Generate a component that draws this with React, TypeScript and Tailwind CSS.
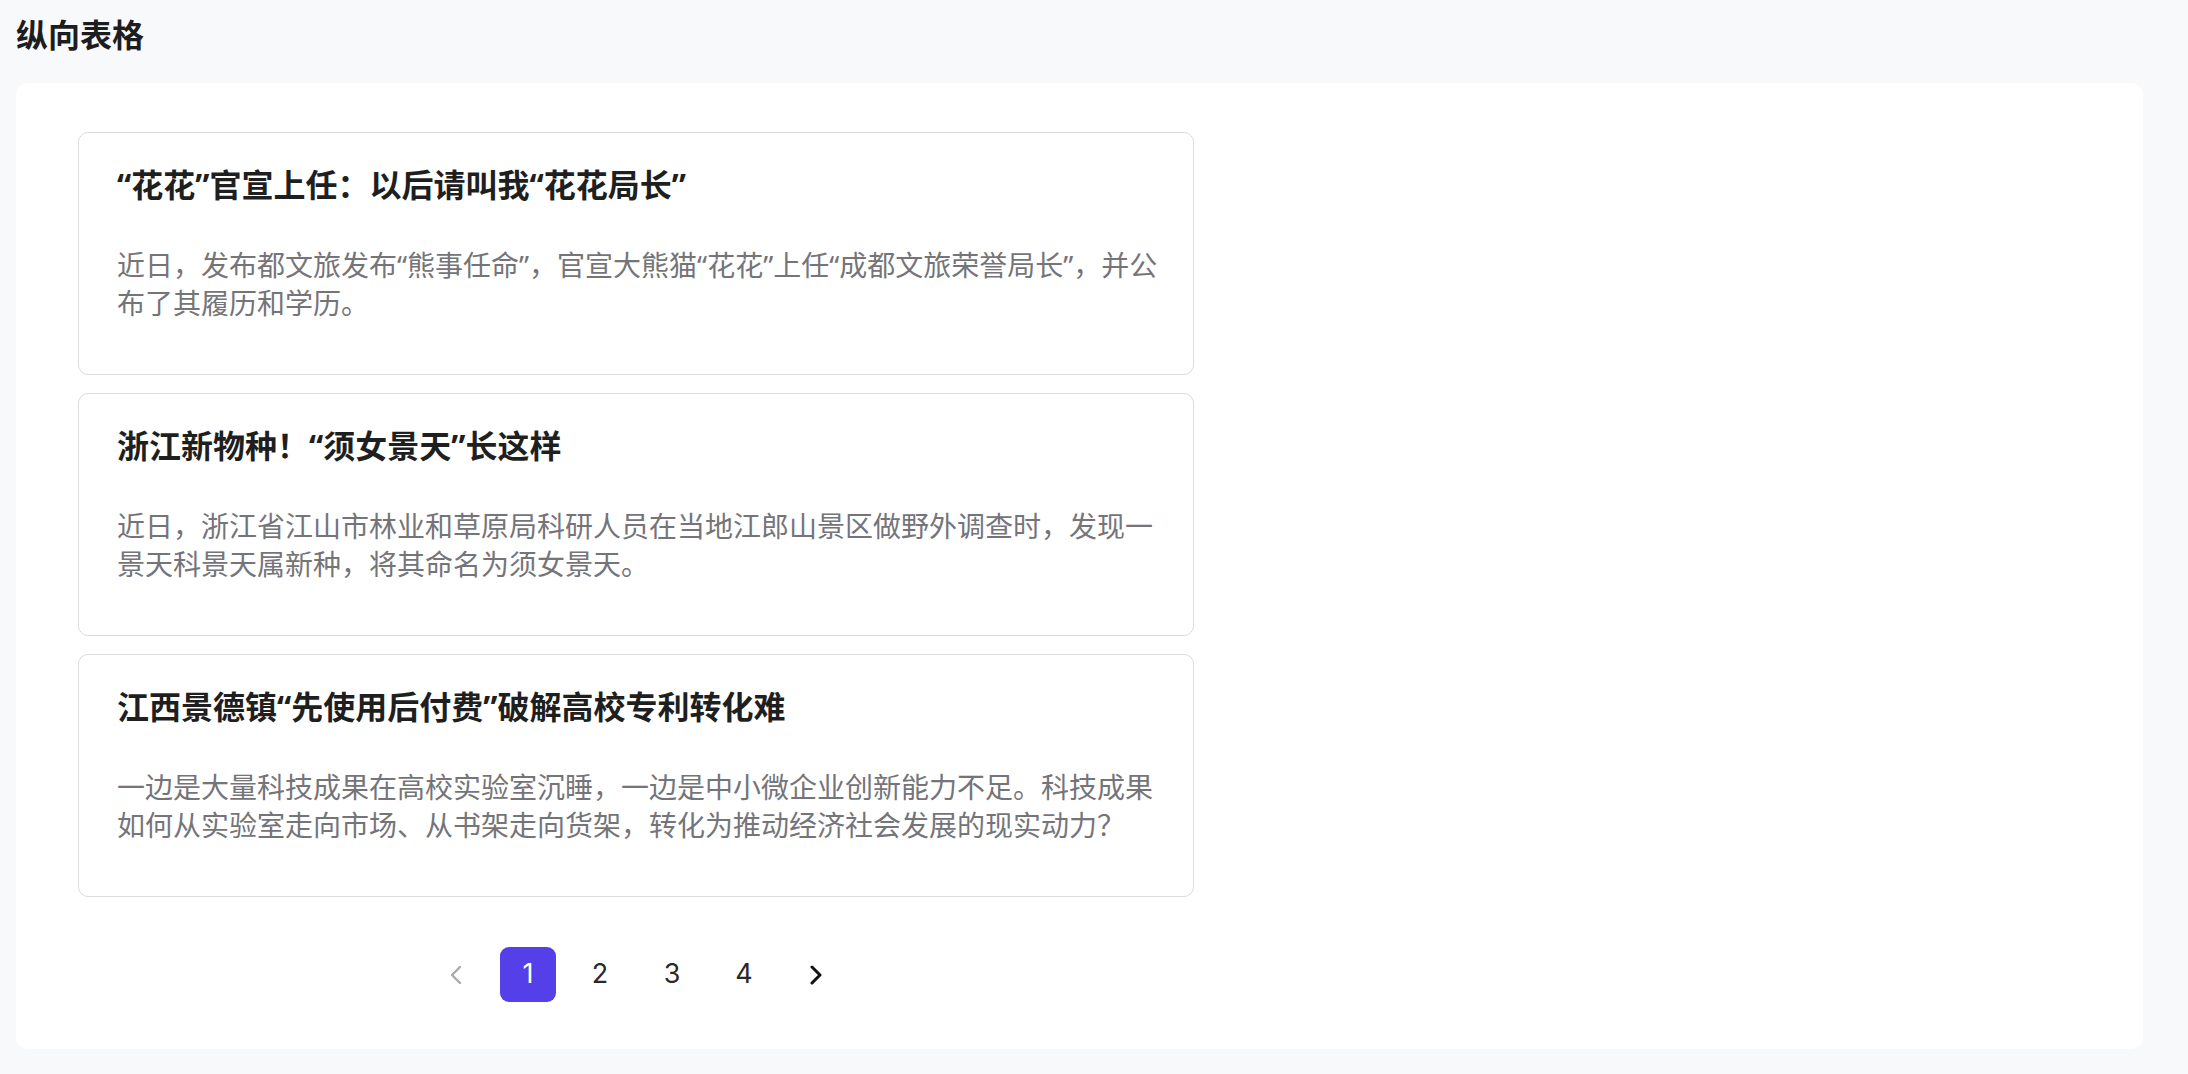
import React from "react";

const items = [
  {
    title: "“花花”官宣上任：以后请叫我“花花局长”",
    desc: "近日，发布都文旅发布“熊事任命”，官宣大熊猫“花花”上任“成都文旅荣誉局长”，并公布了其履历和学历。",
  },
  {
    title: "浙江新物种！“须女景天”长这样",
    desc: "近日，浙江省江山市林业和草原局科研人员在当地江郎山景区做野外调查时，发现一景天科景天属新种，将其命名为须女景天。",
  },
  {
    title: "江西景德镇“先使用后付费”破解高校专利转化难",
    desc: "一边是大量科技成果在高校实验室沉睡，一边是中小微企业创新能力不足。科技成果如何从实验室走向市场、从书架走向货架，转化为推动经济社会发展的现实动力？",
  },
];

export default function App() {
  return (
    <div
      className="min-h-[1074px] w-full bg-[#f8f9fb] pl-[16px] pr-[45px] pt-[16px] pb-[26px]"
      style={{ fontFamily: '"Noto Sans", "Noto Sans CJK SC", sans-serif' }}
    >
      <h1 className="text-[32px] leading-[38px] font-bold text-[#1d1d1f]">纵向表格</h1>
      <div className="mt-[29px] rounded-[12px] bg-white pl-[62px] pt-[49px] pb-[47px]">
        <div className="w-[1116px] flex flex-col gap-[18px]">
          {items.map((it, i) => (
            <div
              key={i}
              className="rounded-[10px] border border-[#dcdcdc] bg-white pl-[38px] pr-[26px] pt-[32px] pb-[52px]"
            >
              <div className="text-[32px] leading-[40px] font-bold text-[#1f1f1f]">{it.title}</div>
              <div className="mt-[42px] text-[28px] leading-[37.5px] text-[#747479]">{it.desc}</div>
            </div>
          ))}
        </div>
        <div className="w-[1116px] mt-[50px] flex justify-center">
          <div
            className="flex items-center gap-[16px]"
            style={{ fontFamily: 'Inter, "Noto Sans", sans-serif' }}
          >
            <button className="w-[56px] h-[55px] flex items-center justify-center">
              <svg width="14" height="20" viewBox="0 0 14 20" fill="none">
                <polyline points="11,2 3,10 11,18" stroke="#a9a9a9" strokeWidth="2.4" strokeLinecap="round" strokeLinejoin="round" />
              </svg>
            </button>
            <button className="w-[56px] h-[55px] rounded-[9px] bg-[#553fe8] text-white text-[27px] flex items-center justify-center">
              1
            </button>
            <button className="w-[56px] h-[55px] rounded-[9px] text-[#2a2a2a] text-[27px] flex items-center justify-center">
              2
            </button>
            <button className="w-[56px] h-[55px] rounded-[9px] text-[#2a2a2a] text-[27px] flex items-center justify-center">
              3
            </button>
            <button className="w-[56px] h-[55px] rounded-[9px] text-[#2a2a2a] text-[27px] flex items-center justify-center">
              4
            </button>
            <button className="w-[56px] h-[55px] flex items-center justify-center">
              <svg width="14" height="20" viewBox="0 0 14 20" fill="none">
                <polyline points="3,2 11,10 3,18" stroke="#111111" strokeWidth="3" strokeLinecap="round" strokeLinejoin="round" />
              </svg>
            </button>
          </div>
        </div>
      </div>
    </div>
  );
}
